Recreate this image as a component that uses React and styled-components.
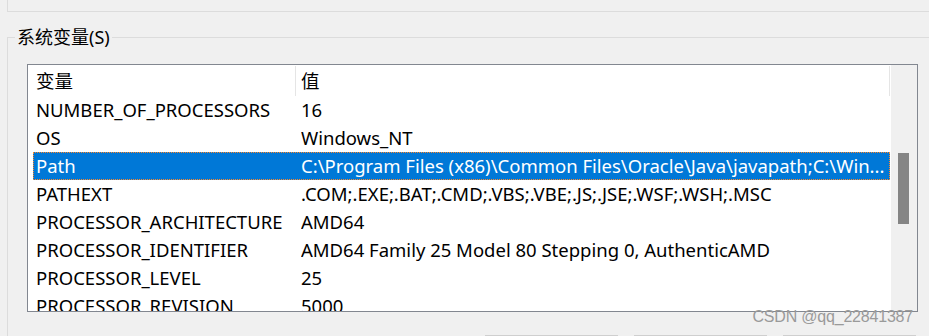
import React from 'react';
import styled, { createGlobalStyle } from 'styled-components';

const GlobalStyle = createGlobalStyle`
  html, body {
    margin: 0;
    padding: 0;
    overflow: hidden;
    background: #f0f0f0;
  }
  body {
    font-family: "Noto Sans", "Noto Sans CJK SC", sans-serif;
    font-size: 18.5px;
    color: #000;
  }
`;

const rows = [
    ['NUMBER_OF_PROCESSORS', '16'],
    ['OS', 'Windows_NT'],
    ['Path', 'C:\\Program Files (x86)\\Common Files\\Oracle\\Java\\javapath;C:\\Win...'],
    ['PATHEXT', '.COM;.EXE;.BAT;.CMD;.VBS;.VBE;.JS;.JSE;.WSF;.WSH;.MSC'],
    ['PROCESSOR_ARCHITECTURE', 'AMD64'],
    ['PROCESSOR_IDENTIFIER', 'AMD64 Family 25 Model 80 Stepping 0, AuthenticAMD'],
    ['PROCESSOR_LEVEL', '25'],
    ['PROCESSOR_REVISION', '5000'],
];

class App extends React.Component {
    render() {
        return (
            <Page>
                <GlobalStyle />
                <UpperGroup />
                <GroupBox>
                    <Legend>系统变量(S)</Legend>
                    <ListBox>
                        <ListArea>
                            <Header>
                                <HeadCell first>变量</HeadCell>
                                <HeadCell>值</HeadCell>
                            </Header>
                            {rows.map(([name, value]) => (
                                <Row key={name} selected={name === 'Path'}>
                                    <Cell>{name}</Cell>
                                    <Cell>{value}</Cell>
                                </Row>
                            ))}
                        </ListArea>
                        <ScrollBar>
                            <Thumb />
                        </ScrollBar>
                    </ListBox>
                    <ButtonRow>
                        <Button />
                        <Button />
                        <Button />
                    </ButtonRow>
                </GroupBox>
                <Watermark>CSDN @qq_22841387</Watermark>
            </Page>
        );
    }
}

const Page = styled.div`
    position: relative;
    width: 929px;
    height: 336px;
    overflow: hidden;
`;

const UpperGroup = styled.div`
    height: 11px;
    margin: 0 -20px 0 7px;
    border-left: 1px solid #dcdcdc;
    border-bottom: 1px solid #dcdcdc;
`;

const GroupBox = styled.fieldset`
    margin: 15px -20px 0 7px;
    padding: 0 0 20px 19px;
    border: 1px solid #dcdcdc;
    min-width: 0;
`;

const Legend = styled.legend`
    margin-left: -12px;
    padding: 0 2px;
    line-height: 20px;
    font-size: 18px;
`;

const ListBox = styled.div`
    margin-top: 17px;
    width: 889px;
    height: 246px;
    border: 1px solid #828790;
    background: #fff;
    display: flex;
    overflow: hidden;
`;

const ListArea = styled.div`
    width: 863px;
    overflow: hidden;
`;

const Header = styled.div`
    display: grid;
    grid-template-columns: 263px 594px;
    height: 31px;
    margin-left: 5px;
`;

const HeadCell = styled.div`
    padding-left: ${p => (p.first ? '3px' : '5px')};
    line-height: 30px;
    border-right: 1px solid #e5e5e5;
    margin-top: 1px;
    white-space: nowrap;
`;

const Row = styled.div`
    display: grid;
    grid-template-columns: 265px 1fr;
    width: 857px;
    box-sizing: border-box;
    height: 28px;
    line-height: 28px;
    margin-left: 5px;
    padding-left: 3px;
    white-space: nowrap;
    background: ${p => (p.selected ? '#0078d7' : 'transparent')};
    color: ${p => (p.selected ? '#fff' : '#000')};
    outline: ${p => (p.selected ? '1px dotted #ff8728' : 'none')};
    outline-offset: -1px;
`;

const Cell = styled.div`
    overflow: hidden;
`;

const ScrollBar = styled.div`
    width: 26px;
    background: #f0f0f0;
    padding: 88px 0 0 7px;
    box-sizing: border-box;
`;

const Thumb = styled.div`
    width: 11px;
    height: 71px;
    background: #858585;
`;

const ButtonRow = styled.div`
    display: flex;
    justify-content: flex-end;
    gap: 16px;
    width: 889px;
    margin-top: 23px;
`;

const Button = styled.div`
    width: 131px;
    height: 30px;
    border: 1px solid #cfcfcf;
    background: #e1e1e1;
`;

const Watermark = styled.div`
    position: absolute;
    right: 16px;
    top: 308px;
    font-family: "Liberation Sans", Arial, sans-serif;
    font-size: 16px;
    color: #9a9a9a;
    letter-spacing: -0.2px;
`;

export default App;
